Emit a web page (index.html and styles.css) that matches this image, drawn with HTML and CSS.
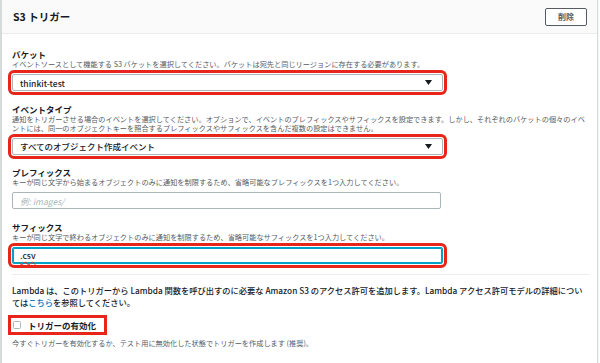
FILE: index.html
```html
<!DOCTYPE html>
<html lang="ja">
<head>
  <meta charset="UTF-8" />
  <title>S3 トリガー</title>
  <link rel="stylesheet" href="styles.css">
</head>
<body>
  <div class="panel">
    <div class="panel-header">
      <div class="panel-title">S3 トリガー</div>
      <button class="btn-delete">削除</button>
    </div>
    <div class="panel-body">
      <div class="field first">
        <div class="field-label">バケット</div>
        <div class="field-desc">イベントソースとして機能する S3 バケットを選択してください。バケットは宛先と同じリージョンに存在する必要があります。</div>
        <div class="select hl">
          <span>thinkit-test</span>
          <svg class="caret" width="7" height="5" viewBox="0 0 7 5"><path d="M0 0h7L3.5 5z" fill="#16191f"/></svg>
        </div>
      </div>
      <div class="field">
        <div class="field-label">イベントタイプ</div>
        <div class="field-desc">通知をトリガーさせる場合のイベントを選択してください。オプションで、イベントのプレフィックスやサフィックスを設定できます。しかし、それぞれのバケットの個々のイベントには、同一のオブジェクトキーを照合するプレフィックスやサフィックスを含んだ複数の設定はできません。</div>
        <div class="select hl">
          <span>すべてのオブジェクト作成イベント</span>
          <svg class="caret" width="7" height="5" viewBox="0 0 7 5"><path d="M0 0h7L3.5 5z" fill="#16191f"/></svg>
        </div>
      </div>
      <div class="field">
        <div class="field-label">プレフィックス</div>
        <div class="field-desc">キーが同じ文字から始まるオブジェクトのみに通知を制限するため、省略可能なプレフィックスを1つ入力してください。</div>
        <div class="input"><span class="placeholder">例: images/</span></div>
      </div>
      <div class="field">
        <div class="field-label">サフィックス</div>
        <div class="field-desc">キーが同じ文字で終わるオブジェクトのみに通知を制限するため、省略可能なサフィックスを1つ入力してください。</div>
        <div class="input focused hl"><span class="typo">.csv</span></div>
      </div>
      <div class="divider"></div>
      <p class="notice">Lambda は、このトリガーから Lambda 関数を呼び出すのに必要な Amazon S3 のアクセス許可を追加します。Lambda アクセス許可モデルの詳細については<a href="#">こちら</a>を参照してください。</p>
      <label class="check hl">
        <span class="check-box"></span>
        <span>トリガーの有効化</span>
      </label>
      <div class="field-desc check-desc">今すぐトリガーを有効化するか、テスト用に無効化した状態でトリガーを作成します (推奨)。</div>
    </div>
  </div>
</body>
</html>
```

FILE: styles.css
```css
body {
  margin: 0;
  background: #fff;
  font-family: "Noto Sans CJK JP", "Noto Sans", sans-serif;
  color: #16191f;
}
.panel {
  width: 595px;
  background: #fff;
  border-left: 2px solid #d5dbdb;
  border-right: 1px solid #d5dbdb;
  border-bottom: 1px solid #aab7b8;
  box-shadow: 0 1px 1px 0 rgba(0,28,36,0.2);
}
.panel-header {
  height: 34px;
  box-sizing: border-box;
  padding: 0 10px 0 11px;
  display: flex;
  align-items: center;
  justify-content: space-between;
  background: #fafafa;
  border-bottom: 1px solid #eaeded;
}
.panel-title {
  font-size: 10.5px;
  font-weight: 700;
  line-height: 14px;
}
.btn-delete {
  width: 42px;
  height: 18px;
  padding: 0;
  background: #fff;
  border: 1px solid #545b64;
  border-radius: 2px;
  font-family: inherit;
  font-size: 8px;
  font-weight: 700;
  color: #545b64;
  line-height: 14px;
}
.panel-body {
  padding: 0 10px 15px 10px;
  width: 575px;
}
.field {
  margin-top: 12.5px;
}
.field.first {
  margin-top: 15px;
}
.field-label {
  font-size: 8.5px;
  font-weight: 700;
  line-height: 11px;
}
.field-desc {
  font-size: 7.2px;
  line-height: 9px;
  color: #545b64;
}
.select, .input {
  margin-top: 5px;
  width: 431px;
  height: 17px;
  box-sizing: border-box;
  border: 1px solid #aab7b8;
  border-radius: 2px;
  background: #fff;
  display: flex;
  align-items: center;
  padding: 0 7px;
  font-size: 8.5px;
  font-weight: 500;
}
.input {
  width: 429px;
}
.select {
  justify-content: space-between;
  padding-right: 10px;
}
.input.focused {
  width: 431px;
  border-color: #00a1c9;
  box-shadow: inset 0 0 0 1px #00a1c9;
}
.placeholder {
  color: #aab7b8;
  font-style: italic;
  font-weight: 400;
}
.typo {
  text-decoration: underline wavy #e0301e;
  text-decoration-thickness: 1px;
  text-underline-offset: 2px;
}
.hl {
  outline: 3px solid #e8251a;
  outline-offset: 1px;
}
.divider {
  margin-top: 10px;
  height: 1px;
  background: #eaeded;
  margin-right: -2px;
}
.notice {
  margin: 9px 0 0 0;
  font-size: 8.25px;
  font-weight: 500;
  line-height: 12.5px;
}
.notice a {
  color: #0073bb;
  text-decoration: none;
}
.check {
  margin-top: 10.5px;
  display: inline-flex;
  align-items: center;
  width: 91px;
  height: 12px;
  font-size: 8.5px;
  font-weight: 700;
}
.check-box {
  width: 8px;
  height: 8px;
  box-sizing: border-box;
  border: 1px solid #aab7b8;
  border-radius: 1.5px;
  margin: 0 7px 0 1px;
}
.check-desc {
  margin-top: 4.5px;
}
```
